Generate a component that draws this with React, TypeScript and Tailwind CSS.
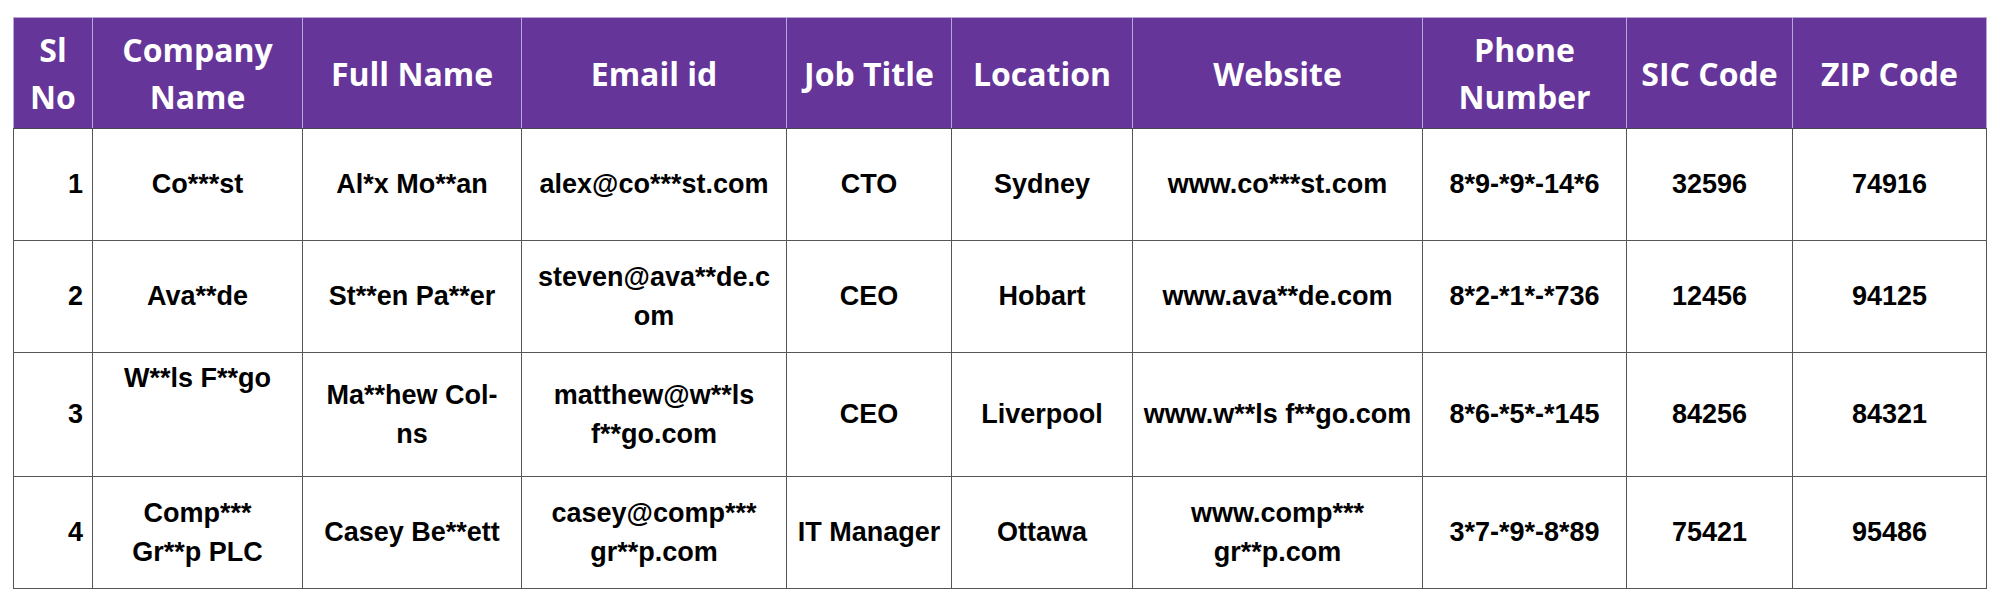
import React from "react";

type Row = {
  h: string;
  cells: string[][];
  topCompany?: boolean;
};

const widths = [79, 210, 219, 265, 165, 181, 290, 204, 166, 194];

const headers: string[][] = [
  ["Sl", "No"],
  ["Company", "Name"],
  ["Full Name"],
  ["Email id"],
  ["Job Title"],
  ["Location"],
  ["Website"],
  ["Phone", "Number"],
  ["SIC Code"],
  ["ZIP Code"],
];

const rows: Row[] = [
  {
    h: "h-[112px]",
    cells: [
      ["1"],
      ["Co***st"],
      ["Al*x Mo**an"],
      ["alex@co***st.com"],
      ["CTO"],
      ["Sydney"],
      ["www.co***st.com"],
      ["8*9-*9*-14*6"],
      ["32596"],
      ["74916"],
    ],
  },
  {
    h: "h-[112px]",
    cells: [
      ["2"],
      ["Ava**de"],
      ["St**en Pa**er"],
      ["steven@ava**de.c", "om"],
      ["CEO"],
      ["Hobart"],
      ["www.ava**de.com"],
      ["8*2-*1*-*736"],
      ["12456"],
      ["94125"],
    ],
  },
  {
    h: "h-[124px]",
    topCompany: true,
    cells: [
      ["3"],
      ["W**ls F**go"],
      ["Ma**hew Col-", "ns"],
      ["matthew@w**ls", "f**go.com"],
      ["CEO"],
      ["Liverpool"],
      ["www.w**ls f**go.com"],
      ["8*6-*5*-*145"],
      ["84256"],
      ["84321"],
    ],
  },
  {
    h: "h-[112px]",
    cells: [
      ["4"],
      ["Comp***", "Gr**p PLC"],
      ["Casey Be**ett"],
      ["casey@comp***", "gr**p.com"],
      ["IT Manager"],
      ["Ottawa"],
      ["www.comp***", "gr**p.com"],
      ["3*7-*9*-8*89"],
      ["75421"],
      ["95486"],
    ],
  },
];

function Lines({ lines }: { lines: string[] }) {
  return (
    <>
      {lines.map((l, i) => (
        <React.Fragment key={i}>
          {i > 0 && <br />}
          {l}
        </React.Fragment>
      ))}
    </>
  );
}

export default function App() {
  return (
    <div className="w-[2000px] h-[600px] bg-white pt-[17px] pl-[13px]">
      <table className="table-fixed border-collapse w-[1973px]">
        <colgroup>
          {widths.map((w, i) => (
            <col key={i} style={{ width: w }} />
          ))}
        </colgroup>
        <thead>
          <tr className="h-[111px]">
            {headers.map((h, i) => (
              <th
                key={i}
                className="bg-[#66359a] border border-[#b9a6d6] border-b-[#4b4453] text-white text-center align-middle font-bold text-[32px] leading-[47px] px-0 font-['Open_Sans',sans-serif] whitespace-nowrap"
              >
                <Lines lines={h} />
              </th>
            ))}
          </tr>
        </thead>
        <tbody>
          {rows.map((r, ri) => (
            <tr key={ri} className={r.h}>
              {r.cells.map((c, ci) => (
                <td
                  key={ci}
                  className={`border border-[#555555] text-black font-bold text-[27px] leading-[39px] font-['Liberation_Sans',Arial,sans-serif] whitespace-nowrap ${
                    ci === 0
                      ? "text-right pr-[9px]"
                      : "text-center px-0"
                  } ${
                    ci === 1 && r.topCompany
                      ? "align-top pt-[6px]"
                      : "align-middle"
                  }`}
                >
                  <Lines lines={c} />
                </td>
              ))}
            </tr>
          ))}
        </tbody>
      </table>
    </div>
  );
}
